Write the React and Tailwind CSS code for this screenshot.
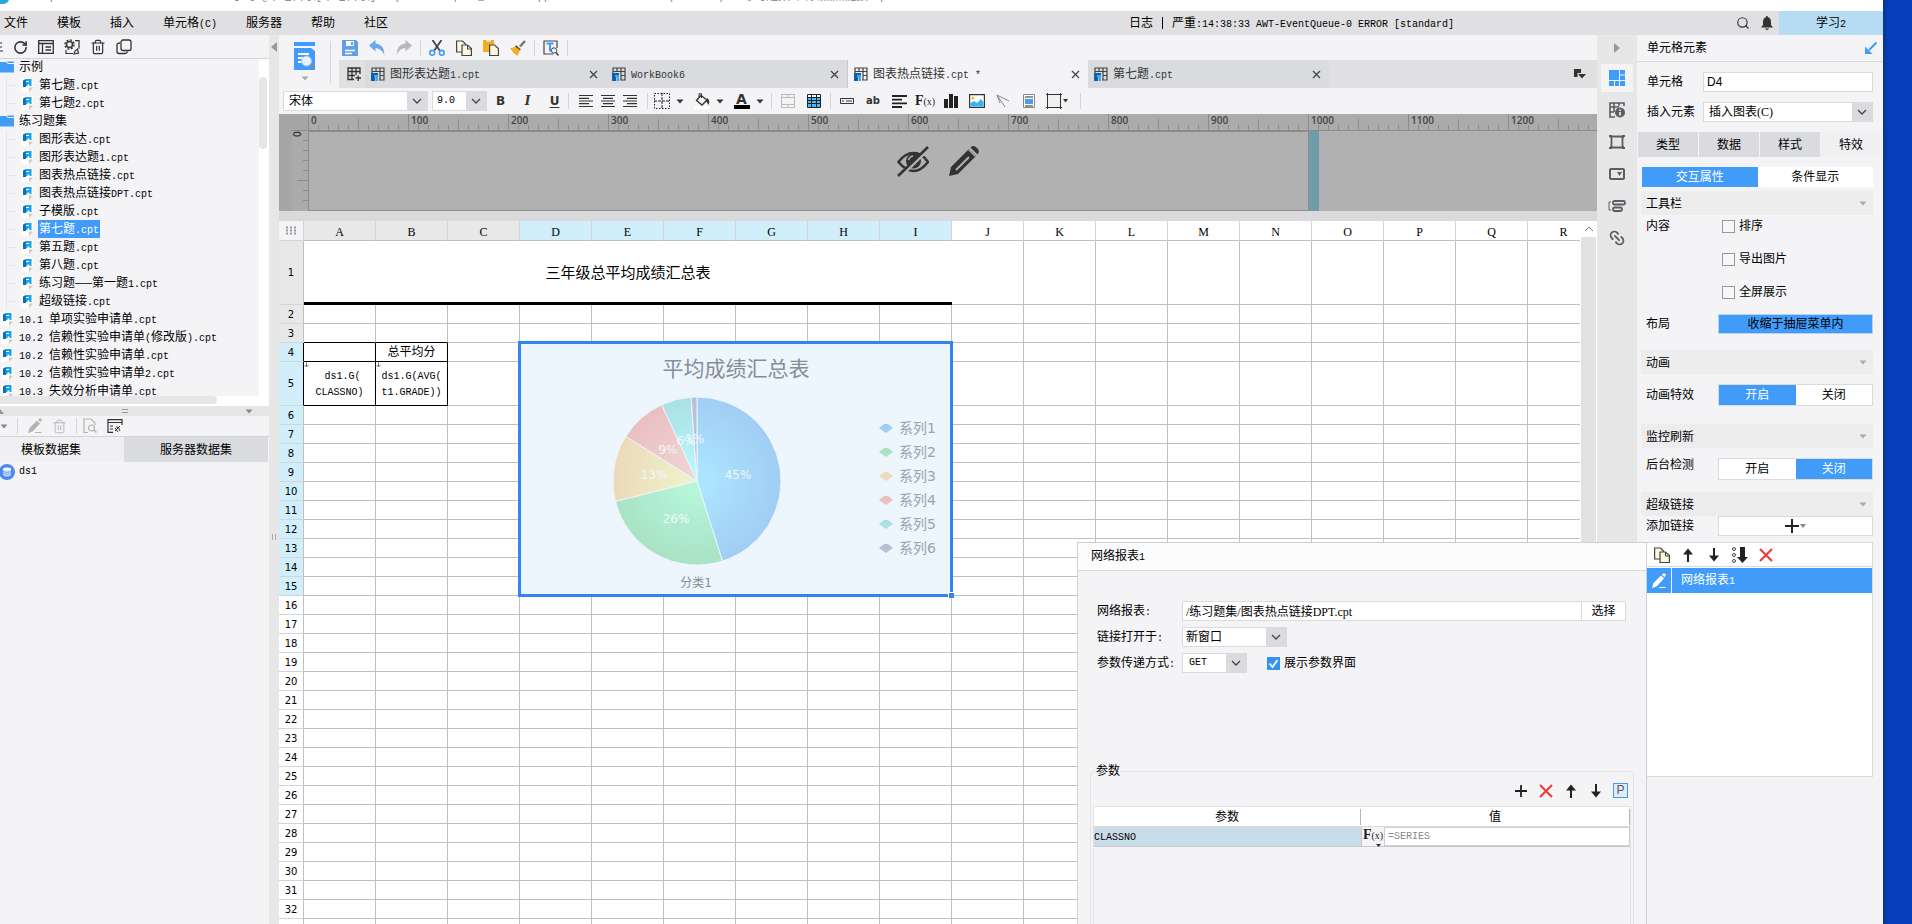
import React, { useState } from 'react';
import { RotateCw, Trash2, Search, Link2 } from 'lucide-react';

const FONT = "font-['Liberation_Serif','Noto_Sans_CJK_SC',sans-serif]";

// Latin runs are set in a fixed pitch, half the width of a Chinese character
const Txt = ({ children }) =>
  children.split(/([\x20-\x7e]+)/).filter(Boolean).map((part, i) =>
    /^[\x20-\x7e]+$/.test(part)
      ? <span key={i} className="font-['Liberation_Mono',monospace] text-[10px] whitespace-pre">{part}</span>
      : <span key={i}>{part}</span>
  );

const Svg = ({ w = 16, h = 16, children, className = '' }) => (
  <svg width={w} height={h} viewBox={`0 0 ${w} ${h}`} fill="none" className={`shrink-0 ${className}`}>{children}</svg>
);

const Caret = ({ className = 'text-[#333]' }) => (
  <Svg w={8} h={5} className={className}><path d="M0.500 0.500h7L4 4.500z" fill="currentColor" /></Svg>
);

const Chevron = () => (
  <Svg w={10} h={6}><path d="M1 1l4 4 4-4" stroke="#444" strokeWidth="1.300" /></Svg>
);

const Divider = ({ className = 'h-4' }) => <span className={`w-px shrink-0 bg-[#d4d4d8] ${className}`} />;

const IconButton = ({ label, className = '', children }) => (
  <button type="button" aria-label={label} className={`flex shrink-0 items-center justify-center ${className}`}>{children}</button>
);

/* ---------- icons ---------- */

const FileIcon = () => (
  <Svg w={12} h={14}>
    <path d="M0 0h12v9l-4 5H0z" fill="#fff" />
    <path d="M8 14V9.500h4z" fill="#c9c9c9" />
    <path d="M2 2.500L5 1v8H2z" fill="#0a70c4" />
    <path d="M5 1h5.500v7H8.500V6.500H6.500V8H5z" fill="#1aa3e8" />
    <path d="M5 3.500h3" stroke="#fff" />
  </Svg>
);

const FolderIcon = () => (
  <Svg w={14} h={12}><path d="M0 1h6l2 2h6v8.500H0z" fill="#409bf9" /><path d="M7 .5h7v1.500H8z" fill="#409bf9" /></Svg>
);

const BookIcon = () => (
  <Svg w={14} h={14}>
    <path d="M1 7V1h12v12H8M1 4.500h12M5 1v4M9 1v12M9 8.500h4" stroke="#444" strokeWidth="1.200" />
    <path d="M0 6h7v4H4v4H0z" fill="#0e5fae" />
    <path d="M3 8h4v6H4.500v-4H3z" fill="#3fa9e8" />
  </Svg>
);

const CopyIcon = () => (
  <Svg>
    <path d="M.6 1h6L9.500 4v8H.6z" fill="#fff6df" stroke="#444" strokeWidth="1.200" />
    <path d="M6 5h5.500L15.400 8.500v7H6z" fill="#fff6df" stroke="#444" strokeWidth="1.200" />
    <path d="M11.500 5v4h4" stroke="#444" />
  </Svg>
);

const PencilIcon = ({ color }) => (
  <Svg>
    <path d="M1 15l1.500-5L10 2.500 13 5.500 5.500 13.500z" fill={color} />
    <path d="M11 1.800L12.200.6q1-.8 2 .2t.3 2l-1.200 1.500z" fill={color} />
    <path d="M8 14.500h6.500" stroke={color} />
  </Svg>
);

const ArrowUp = () => <Svg><path d="M8 15V5" stroke="#222" strokeWidth="2" /><path d="M3 7.500L8 1.500l5 6z" fill="#222" /></Svg>;
const ArrowDown = () => <Svg><path d="M8 1v10" stroke="#222" strokeWidth="2" /><path d="M3 8.500L8 14.500l5-6z" fill="#222" /></Svg>;
const RedCross = () => <Svg><path d="M2 2l12 12M14 2L2 14" stroke="#ea4039" strokeWidth="2.200" /></Svg>;

const FxIcon = () => <span className="font-['Liberation_Serif',serif] text-sm leading-4 text-[#222] font-bold">F<span className="text-[10px] font-normal">(x)</span></span>;

/* ---------- data ---------- */

const menus = ['文件', '模板', '插入', '单元格(C)', '服务器', '帮助', '社区'];

const folders = [
  { name: '示例', files: ['第七题.cpt', '第七题2.cpt'] },
  {
    name: '练习题集',
    files: ['图形表达.cpt', '图形表达题1.cpt', '图表热点链接.cpt', '图表热点链接DPT.cpt', '子模版.cpt', '第七题.cpt', '第五题.cpt', '第八题.cpt', '练习题──第一题1.cpt', '超级链接.cpt'],
    selected: 5,
  },
];

const rootFiles = ['10.1 单项实验申请单.cpt', '10.2 信赖性实验申请单(修改版).cpt', '10.2 信赖性实验申请单.cpt', '10.2 信赖性实验申请单2.cpt', '10.3 失效分析申请单.cpt'];

const tabs = ['图形表达题1.cpt', 'WorkBook6', '图表热点链接.cpt *', '第七题.cpt'];

const columns = 'ABCDEFGHIJKLMNOPQRSTUVWXYZ'.split('');
const rows = Array.from({ length: 40 }, (_, i) => i + 1);

const slices = [
  { name: '系列1', from: 0, to: 45.1, inner: '#ade5ff', outer: '#a0cdf4', label: '45%', x: 217, y: 135 },
  { name: '系列2', from: 45.1, to: 71.1, inner: '#b6f7da', outer: '#a9e2c5', label: '26%', x: 155, y: 179 },
  { name: '系列3', from: 71.1, to: 83.9, inner: '#eef2c8', outer: '#ebdabb', label: '13%', x: 133, y: 135 },
  { name: '系列4', from: 83.9, to: 93.1, inner: '#f0d4d4', outer: '#eabfc2', label: '9%', x: 147, y: 110 },
  { name: '系列5', from: 93.1, to: 98.9, inner: '#b8f8fb', outer: '#abe0e4', label: '6%', x: 165, y: 101 },
  { name: '系列6', from: 98.9, to: 100, inner: '#b9c2da', outer: '#b8c0d8', label: '1%', x: 174, y: 99 },
];

/* ---------- left side ---------- */

const FileRow = ({ name, nested, active }) => (
  <li className="flex h-[18px] items-center">
    {nested && <span className="mr-[5px] h-px w-[9px] bg-[#e6e6ea]" />}
    <FileIcon />
    <a href="#" className={`ml-[5px] h-[18px] pr-px pl-px leading-[18px] whitespace-nowrap ${active ? 'bg-[#409bf9] text-white' : ''}`}><Txt>{name}</Txt></a>
  </li>
);

const FilePanel = () => (
  <aside className="flex w-[269px] shrink-0 flex-col bg-[#f4f4f7]">
    <div className="flex h-6 shrink-0 items-center gap-[10px] border-b border-[#d4d4d8] pt-px text-[#333]">
      <Svg w={3} h={14}><path d="M0 3h2M0 7h2M0 11h3" stroke="#333" /></Svg>
      <IconButton label="刷新"><RotateCw size={15} strokeWidth={2.5} /></IconButton>
      <IconButton label="打开目录">
        <Svg><path d="M.7 1.700h14.600v12.600H.7zM.7 4.500h14.600M4.500 4.500v10M7.500 8H13M7.500 11H13" stroke="#333" strokeWidth="1.300" /></Svg>
      </IconButton>
      <IconButton label="设置">
        <Svg>
          <circle cx="5.500" cy="5.500" r="3" stroke="#333" strokeWidth="1.500" />
          <circle cx="5.500" cy="5.500" r="4.600" stroke="#333" strokeWidth="1.300" strokeDasharray="2 1.600" />
          <path d="M11 1.700h4v8M2 11v3.500h7M10 15l1-3 2.500-2 1 4z" stroke="#333" strokeWidth="1.200" />
        </Svg>
      </IconButton>
      <IconButton label="删除"><Trash2 size={16} strokeWidth={1.8} /></IconButton>
      <IconButton label="复制">
        <Svg><rect x="5" y="1" width="10" height="10.500" rx="2" stroke="#333" strokeWidth="1.300" /><path d="M4 4q-3 0-3 2v6.500q0 2 2 2h6q2 0 2.500-2" stroke="#333" strokeWidth="1.300" /></Svg>
      </IconButton>
    </div>

    <div className="flex h-[337px] shrink-0">
      <ul className="-mt-px flex-1 overflow-hidden">
        {folders.map((folder) => (
          <li key={folder.name}>
            <div className="flex h-[18px] items-center gap-[5px]"><FolderIcon /><span className="leading-[18px]">{folder.name}</span></div>
            <ul className="ml-[6px] border-l border-[#e6e6ea]">
              {folder.files.map((f, i) => <FileRow key={f} name={f} nested active={i === folder.selected} />)}
            </ul>
          </li>
        ))}
        <li>
          <ul className="pl-px">{rootFiles.map((f) => <FileRow key={f} name={f} />)}</ul>
        </li>
      </ul>
      <div className="w-[10px] bg-white pt-[18px]"><div className="h-[72px] w-2 rounded bg-[#e6e6e6]" /></div>
    </div>
    <div className="h-[10px] shrink-0 bg-white pr-[52px]"><div className="h-2 rounded-r bg-[#e6e6e6]" /></div>

    <div className="flex h-[10px] shrink-0 items-center justify-between bg-[#e6e6e6] pr-4 text-[#999]">
      <Svg w={4} h={5}><path d="M0 0l4 5H0z" fill="#999" /></Svg>
      <Svg w={6} h={4}><path d="M0 .5h6M0 3.500h6" stroke="#999" /></Svg>
      <Caret className="text-[#888]" />
    </div>

    <div className="flex h-[21px] shrink-0 items-center gap-[9px] border-b border-[#d4d4d8]">
      <Caret className="text-[#888]" />
      <Divider />
      <IconButton label="编辑"><PencilIcon color="#b4b4b4" /></IconButton>
      <IconButton label="删除数据集"><Trash2 size={15} strokeWidth={1.5} color="#b4b4b4" /></IconButton>
      <Divider className="-mr-1 h-4" />
      <IconButton label="预览">
        <Svg><path d="M6 14.500H2V1h7l4 4v2" stroke="#b4b4b4" strokeWidth="1.200" /><circle cx="9.500" cy="10" r="3" stroke="#b4b4b4" strokeWidth="1.200" /><path d="M12 12l2.500 2.500" stroke="#b4b4b4" strokeWidth="1.500" /></Svg>
      </IconButton>
      <IconButton label="连接">
        <Svg><path d="M6 14.300H1V1.700h14V7M1 4.500h14M3 8h3M3 11h3" stroke="#333" strokeWidth="1.200" /><path d="M8 13l5-5M9 9q3-1 4 4M8 10l3 4" stroke="#333" /></Svg>
      </IconButton>
    </div>

    <div className="flex h-[25px] shrink-0">
      <button type="button" className="w-[124px] bg-[#f0f0f2] pr-[22px]">模板数据集</button>
      <button type="button" className="w-[144px] bg-[#dadbde]">服务器数据集</button>
    </div>
    <div className="mt-px flex h-[18px] items-center gap-1">
      <Svg w={15}>
        <circle cx="7" cy="8" r="8" fill="#4d8bf0" />
        <path d="M3 5v6q4 3 8 0V5z" fill="#c8dcfb" /><ellipse cx="7" cy="5" rx="4" ry="1.500" fill="#fff" />
        <path d="M3 7.500q4 2 8 0M3 9.500q4 2 8 0" stroke="#7fa9f0" />
      </Svg>
      <Txt>ds1</Txt>
    </div>
  </aside>
);

/* ---------- toolbars ---------- */

const MainToolbar = () => (
  <div className="flex h-[25px] items-center gap-[11px] pl-[3px]">
    <IconButton label="保存">
      <Svg><path d="M0 0h14l2 2v14H0z" fill="#5e9fe8" /><path d="M4 1h8v5H4z" fill="#fff" /><path d="M9 2h2v3H9z" fill="#5e9fe8" /><path d="M3 10.500h10M3 13.500h7" stroke="#fff" strokeWidth="1.500" /></Svg>
    </IconButton>
    <IconButton label="撤销"><Svg><path d="M0 5.500L6.500 0v3.500Q15 4 15.500 15 12 8 6.500 8v3.500z" fill="#66a9f0" /></Svg></IconButton>
    <IconButton label="重做"><Svg><path d="M16 5.500L9.500 0v3.500Q1 4 .5 15 4 8 9.500 8v3.500z" fill="#b9b9bc" /></Svg></IconButton>
    <Divider className="-mx-[3px] h-4" />
    <IconButton label="剪切">
      <Svg><path d="M3.500 0L11 11M12.500 0L5 11" stroke="#444" strokeWidth="1.800" /><circle cx="3.200" cy="12.800" r="2.400" stroke="#409bf9" strokeWidth="1.600" /><circle cx="12.800" cy="12.800" r="2.400" stroke="#409bf9" strokeWidth="1.600" /></Svg>
    </IconButton>
    <IconButton label="复制"><CopyIcon /></IconButton>
    <IconButton label="粘贴">
      <Svg><path d="M0 0h11v12H0z" fill="#f3ae1c" /><path d="M2.500 0h6v2h-6z" fill="#fff" stroke="#c58a10" strokeWidth=".6" /><path d="M6.600 5h5l3.800 3.500v7H6.600z" fill="#fff6df" stroke="#444" strokeWidth="1.200" /></Svg>
    </IconButton>
    <IconButton label="格式刷">
      <Svg><path d="M15 1l-5 5.500" stroke="#777" strokeWidth="2.500" /><path d="M6 5l5 4.500-1.500 1L5 7z" fill="#555" /><path d="M0 8q3 0 5-1.500l5 4Q8 14 7.500 16 3 13 0 8z" fill="#f3ae1c" /></Svg>
    </IconButton>
    <Divider className="-mx-[3px] h-4" />
    <IconButton label="查找">
      <Svg><path d="M10 14H1V1h13v7" stroke="#444" strokeWidth="1.200" /><path d="M3.500 3.500h7M7 3.500v8" stroke="#409bf9" strokeWidth="2" /><circle cx="11" cy="10.500" r="2.700" stroke="#444" /><path d="M13 12.500l2.500 3" stroke="#444" strokeWidth="1.500" /></Svg>
    </IconButton>
    <Divider className="-mx-[3px] h-4" />
  </div>
);

const FileTabs = () => {
  const [active, setActive] = useState(2);
  return (
    <div className="flex h-7 items-center bg-[#e0e0e2]">
      <IconButton label="新建" className="h-7 w-[26px] pl-[4px]">
        <Svg w={14} h={14}><path d="M7 12.500H1V1h12v6M1 4.500h12M5 1v11.500M9 1v7M1 8.500h7M8.500 11h5.500M11.200 8.500V14" stroke="#333" strokeWidth="1.300" /></Svg>
      </IconButton>
      {tabs.map((name, i) => (
        <div key={name} className={`flex h-7 w-[241px] items-center pr-2 pl-[6px] ${i === active ? 'border-l border-[#c8c8cc] bg-[#f4f4f7]' : 'bg-[#dadbde]'}`}>
          <button type="button" onClick={() => setActive(i)} className="flex flex-1 items-center gap-[5px] text-[#333]"><BookIcon /><span><Txt>{name}</Txt></span></button>
          <IconButton label="关闭"><Svg w={9} h={9}><path d="M1 1l7 7M8 1L1 8" stroke="#444" strokeWidth="1.300" /></Svg></IconButton>
        </div>
      ))}
      <IconButton label="更多标签" className="mr-[11px] ml-auto">
        <Svg w={12} h={10}><path d="M0 0h7v4H3.500v4H0z" fill="#333" /><path d="M4 5h8L8 9.500z" fill="#333" /></Svg>
      </IconButton>
    </div>
  );
};

const AlignIcon = ({ d }) => <Svg w={14} h={12}><path d={`M0 .5h14M0 6h14M0 11.500h14${d}`} stroke="#333" strokeWidth="1.200" /></Svg>;

const FontToolbar = () => (
  <div className="flex h-[26px] items-center pl-1 text-[#333]">
    <div className="flex h-5 w-[145px] border border-[#dadbde] bg-white">
      <select aria-label="字体" className="flex-1 appearance-none pl-[5px] leading-[18px] text-black"><option>宋体</option></select>
      <span className="flex w-5 items-center justify-center bg-[#dadbde]"><Chevron /></span>
    </div>
    <div className="ml-1 flex h-5 w-[55px] border border-[#dadbde] bg-white">
      <select aria-label="字号" className="w-[34px] appearance-none pl-1 font-['Liberation_Mono',monospace] text-[10px] text-black"><option>9.0</option></select>
      <span className="flex w-5 items-center justify-center bg-[#dadbde]"><Chevron /></span>
    </div>
    <IconButton label="加粗" className="w-[27px]"><b className="font-['DejaVu_Sans',sans-serif] text-xs">B</b></IconButton>
    <IconButton label="斜体" className="w-[27px]"><i className="font-['DejaVu_Serif',serif] text-xs font-bold">I</i></IconButton>
    <IconButton label="下划线" className="w-[27px]"><span className="font-['DejaVu_Sans',sans-serif] text-xs font-bold underline underline-offset-2">U</span></IconButton>
    <Divider />
    <div className="flex px-[6px]">
      <IconButton label="左对齐" className="w-[22px]"><AlignIcon d="M0 3.300h10M0 8.700h10" /></IconButton>
      <IconButton label="居中" className="w-[22px]"><AlignIcon d="M2 3.300h10M2 8.700h10" /></IconButton>
      <IconButton label="右对齐" className="w-[22px]"><AlignIcon d="M4 3.300h10M4 8.700h10" /></IconButton>
    </div>
    <Divider />
    <div className="flex pl-[3px]">
      <IconButton label="边框" className="w-[40px] gap-[6px] pr-[5px]">
        <Svg><path d="M.5.5h15v15H.5z" stroke="#222" strokeDasharray="1.500 1.500" /><path d="M8 0v16M0 8h16" stroke="#222" strokeDasharray="3 1" /></Svg><Caret />
      </IconButton>
      <IconButton label="填充" className="w-[40px] gap-[6px] pr-[5px]">
        <Svg><path d="M0 13h16v3H0z" fill="#fff" /><path d="M7 2.500l6 4.500-5 5-5.500-4.500z" stroke="#333" strokeWidth="1.300" /><path d="M5 5V.8h2.500V5" stroke="#333" /><path d="M13 5q3.500 2 1.500 7L12 8z" fill="#333" /></Svg><Caret />
      </IconButton>
      <IconButton label="字体颜色" className="w-[40px] gap-[6px] pr-[5px]">
        <span className="flex w-4 flex-col items-center border-b-4 border-black font-['DejaVu_Sans',sans-serif] text-sm leading-3 font-bold">A</span><Caret />
      </IconButton>
    </div>
    <Divider />
    <div className="flex px-[3px]">
      <IconButton label="合并" className="w-[26px]"><Svg w={14} h={14}><path d="M.5.5h13v13H.5zM.5 3.500h13M.5 10.500h13M7 0v3M7 11v3" stroke="#bbb" /></Svg></IconButton>
      <IconButton label="表格" className="w-[26px]"><Svg w={14} h={14}><path d="M1 1h12v12H1z" fill="#45b8f5" /><path d="M1 1h12v2.500H1z" fill="#fff" /><path d="M.5.5h13v13H.5zM.5 3.500h13M.5 6.500h13M.5 9.500h13M4.500 .5v13M9.500 .5v13" stroke="#222" /></Svg></IconButton>
    </div>
    <Divider />
    <div className="flex pl-[3px]">
      <IconButton label="控件" className="w-[26px]"><Svg w={14} h={6}><path d="M.5.5h13v5H.5zM2 3h2M6 3h6" stroke="#333" /></Svg></IconButton>
      <IconButton label="文本" className="w-[26px]"><span className="font-['DejaVu_Sans',sans-serif] text-[10px] font-bold">ab</span></IconButton>
      <IconButton label="富文本" className="w-[26px]"><Svg w={15} h={13}><path d="M0 1h15M0 4.600h10M0 8.300h15M0 12h10" stroke="#222" strokeWidth="1.800" /></Svg></IconButton>
      <IconButton label="公式" className="w-[26px]"><FxIcon /></IconButton>
      <IconButton label="图表" className="w-[26px]"><Svg w={14} h={14}><path d="M0 5h4v9H0zM5 0h4v14H5zM10 2h4v12h-4z" fill="#222" /></Svg></IconButton>
      <IconButton label="图片" className="w-[26px]"><Svg h={14}><path d="M.6.6h14.800v12.800H.6z" fill="#fff" stroke="#333" strokeWidth="1.200" /><path d="M1.500 12.500V9L5 7l3 2 4-4 2.500 3v4.500z" fill="#35b4f5" /><circle cx="4" cy="4" r="1.500" fill="#f6b73c" /></Svg></IconButton>
      <IconButton label="斜线" className="w-[26px]"><Svg w={14} h={14}><path d="M1 1l12 6M1 1l8 12M1 1l3 8" stroke="#888" /></Svg></IconButton>
      <IconButton label="子报表" className="w-[26px]"><Svg w={12} h={14}><path d="M.5.5h11v13H.5z" fill="#fff" stroke="#888" /><path d="M2 3h8M2 12h8" stroke="#222" /><path d="M2 5h8v5H2z" fill="#4a9cf0" /></Svg></IconButton>
      <IconButton label="悬浮元素" className="w-[30px] gap-px"><Svg><path d="M1.500 0v16M14.500 0v16M0 1.500h16M0 14.500h16" stroke="#333" /><path d="M2 2h12v12H2z" fill="#f0f0f0" /></Svg><Svg w={5} h={4}><path d="M0 0h5L2.500 3.500z" fill="#333" /></Svg></IconButton>
    </div>
    <Divider className="ml-2 h-4" />
  </div>
);

/* ---------- parameter pane ---------- */

const RulerSegment = ({ value }) => (
  <div className="relative h-4 w-[100px] shrink-0">
    <svg width="100" height="16" className="absolute inset-0">
      <path d="M.5 0v16M50.500 5v11M10.500 11v5M20.500 11v5M30.500 11v5M40.500 11v5M60.500 11v5M70.500 11v5M80.500 11v5M90.500 11v5" stroke="#8c8c8c" />
    </svg>
    <span className="absolute top-0 left-[3px] font-['Open_Sans',sans-serif] text-[10px] leading-3 font-semibold text-[#444]">{value}</span>
  </div>
);

const ParameterPane = () => (
  <div className="flex h-[97px] shrink-0 overflow-hidden bg-[#b1b1b1]">
    <div className="w-[13px] shrink-0 bg-[#a6a6a6]" />
    <div className="flex w-4 shrink-0 flex-col">
      <div className="h-[17px] border-b border-[#8c8c8c] bg-[#a6a6a6]" />
      <svg width="16" height="80" className="bg-[#ababab]">
        <path d="M11 9.500h5M11 19.500h5M11 29.500h5M11 39.500h5M5 49.500h11M11 59.500h5M11 69.500h5" stroke="#8c8c8c" />
        <text x="-6" y="9" transform="rotate(-90)" fontFamily="Open Sans" fontSize="10" fontWeight="600" fill="#333">0</text>
      </svg>
    </div>
    <div className="flex min-w-0 flex-1 flex-col">
      <div className="flex h-[17px] shrink-0 overflow-hidden border-b border-[#8c8c8c] bg-[#ababab]">
        {[0, 1, 2, 3, 4, 5, 6, 7, 8, 9, 10, 11, 12, 13, 14, 15].map((n) => <RulerSegment key={n} value={n * 100} />)}
      </div>
      <div className="flex flex-1">
        <div className="flex w-[1001px] shrink-0 justify-center gap-[19px] border border-[#8c8c8c] pt-[13px] pl-[259px]">
          <IconButton label="隐藏参数面板" className="h-8 w-8">
            <Svg w={32} h={32}>
              <path d="M1.500 17Q8 8 16.500 8T31 17q-7 9-14.500 9T1.500 17z" stroke="#333" strokeWidth="2.500" />
              <circle cx="16.500" cy="16" r="7.500" fill="#333" />
              <path d="M11.500 15q1-3.500 4.500-4" stroke="#b1b1b1" strokeWidth="1.500" />
              <path d="M3 32L33 3" stroke="#b1b1b1" strokeWidth="3" />
              <path d="M1 31L31 2" stroke="#333" strokeWidth="2.500" />
            </Svg>
          </IconButton>
          <IconButton label="编辑参数面板" className="h-8 w-8">
            <Svg w={32} h={32}>
              <path d="M1 31l2-9L21 4l7 7-18 18z" fill="#333" />
              <path d="M22.500 2.500q3-3 6.500.5t.5 6.500z" fill="#333" />
              <path d="M8 25L21 12" stroke="#b1b1b1" strokeWidth="2" />
              <path d="M20.500 4.500l7 7" stroke="#b1b1b1" strokeWidth="1.200" />
            </Svg>
          </IconButton>
        </div>
        <div className="w-[10px] bg-[#6e9ca9]" />
      </div>
    </div>
  </div>
);

/* ---------- sheet ---------- */

const R = 84;
const point = (pct) => {
  const a = (pct / 100) * 2 * Math.PI;
  return `${176 + R * Math.sin(a)} ${137 - R * Math.cos(a)}`;
};

const PieChart = () => (
  <svg width="429" height="250" fontFamily="'DejaVu Sans','Noto Sans CJK SC',sans-serif" className="block">
    <defs>
      {slices.map((s, i) => (
        <radialGradient key={s.name} id={`slice${i}`} gradientUnits="userSpaceOnUse" cx="176" cy="137" r={R}>
          <stop offset="0.100" stopColor={s.inner} /><stop offset="1" stopColor={s.outer} />
        </radialGradient>
      ))}
    </defs>
    <text x="215" y="32" textAnchor="middle" fontSize="21" fill="#868e98">平均成绩汇总表</text>
    {slices.map((s, i) => (
      <path key={s.name} d={`M176 137L${point(s.from)}A${R} ${R} 0 0 1 ${point(s.to)}z`} fill={`url(#slice${i})`} stroke="#edf5fd" />
    ))}
    {slices.map((s) => <text key={s.name} x={s.x} y={s.y} textAnchor="middle" fontSize="12" fill="#f0f7fd">{s.label}</text>)}
    <text x="175" y="243" textAnchor="middle" fontSize="12" fill="#868e98">分类1</text>
    {slices.map((s, i) => (
      <g key={s.name}>
        <path d={`M358 ${84 + i * 24}l5-4h4l5 4-7 5z`} fill={s.outer} />
        <text x="378" y={89 + i * 24} fontSize="14" fill="#9ba3ad">{s.name}</text>
      </g>
    ))}
  </svg>
);

const rowHeight = (n) => (n === 1 ? 'h-16' : n === 5 ? 'h-[44px]' : 'h-[19px]');

const headTone = (i, from, to) => (i < from ? 'bg-[#e8e8e8]' : i <= to ? 'bg-[#d0effb]' : 'bg-white');

const cellBorder = (r, c) => {
  const right = (r === 4 || r === 5) && c < 2 ? 'border-r-black' : 'border-r-[#c0c0c0]';
  const bottom = r >= 3 && r <= 5 && c < 2 ? 'border-b-black' : 'border-b-[#c0c0c0]';
  return `${right} ${bottom}`;
};

const cellText = { '4-1': ['总平均分'], '5-0': [' ds1.G(', 'CLASSNO)'], '5-1': ['ds1.G(AVG(', 't1.GRADE))'] };

const Sheet = () => (
  <div className="flex min-h-0 flex-1">
    <div className="relative min-w-0 flex-1 overflow-hidden bg-white">
      <table className="w-[1897px] table-fixed border-separate border-spacing-0">
        <colgroup>
          <col className="w-[25px]" />
          {columns.map((c) => <col key={c} className="w-[72px]" />)}
        </colgroup>
        <thead>
          <tr className="h-5">
            <th className="border-r border-b border-[#d4d4d8] bg-[#f4f4f7] p-0">
              <Svg w={11} h={9} className="mx-auto"><path d="M0 1.500h11M0 4.500h11M0 7.500h11" stroke="#999" strokeWidth="2" strokeDasharray="2 2" /></Svg>
            </th>
            {columns.map((c, i) => (
              <th key={c} scope="col" className={`border-r border-b border-r-[#d4d4d8] border-b-[#c0c0c0] p-0 pt-[3px] font-['Liberation_Serif',serif] text-xs leading-4 font-normal ${headTone(i, 3, 8)}`}>{c}</th>
            ))}
          </tr>
        </thead>
        <tbody>
          {rows.map((r) => (
            <tr key={r} className={rowHeight(r)}>
              <th scope="row" className={`border-r border-b border-b-[#d4d4d8] p-0 pt-px font-['DejaVu_Sans',sans-serif] text-[10px] leading-4 font-normal ${r === 4 || r === 5 ? 'border-r-black' : 'border-r-[#c0c0c0]'} ${headTone(r, 4, 15)}`}>{r}</th>
              {columns.map((c, i) => {
                if (r === 1 && i === 0) {
                  return <td key={c} colSpan={9} className="border-b-3 border-black p-0 pt-[3px] text-center text-[15px] leading-5">三年级总平均成绩汇总表</td>;
                }
                if (r === 1 && i < 9) return null;
                const lines = cellText[`${r}-${i}`];
                return (
                  <td key={c} className={`relative border-r border-b p-0 pt-px text-center leading-[15px] ${cellBorder(r, i)}`}>
                    {lines && lines.map((l) => <div key={l}><Txt>{l}</Txt></div>)}
                    {r === 5 && lines && <Svg w={5} h={6} className="absolute top-0 left-0"><path d="M2.500 0v5M.5 3l2 2 2-2" stroke="#777" /></Svg>}
                  </td>
                );
              })}
            </tr>
          ))}
        </tbody>
      </table>

      {/* floating chart over D4:I15 */}
      <div className="absolute top-[120px] left-[239px] border-3 border-[#3484f0] bg-[#edf5fd]">
        <PieChart />
        <span className="absolute -right-1 -bottom-1 h-[6px] w-[6px] border-t border-l border-white bg-[#3484f0]" />
      </div>
    </div>
    <div className="w-[17px] shrink-0 border-x border-white bg-[#e2e2e2]">
      <IconButton label="向上滚动" className="h-4 w-full bg-white"><Svg w={10} h={6}><path d="M1 5l4-4 4 4" stroke="#777" /></Svg></IconButton>
    </div>
  </div>
);

const Editor = () => (
  <main className="flex min-w-0 flex-1 flex-col bg-[#f4f4f7]">
    <div className="flex h-[53px] shrink-0">
      <div className="flex w-[60px] shrink-0">
        <IconButton label="分页预览" className="mt-[7px] w-[51px] flex-col self-start">
          <Svg w={21} h={28}>
            <path d="M0 0h21v4H0zM0 6h17l4 3v19H0z" fill="#409bf9" />
            <path d="M4 12h11M4 16h5M4 20h4" stroke="#fff" strokeWidth="2" />
            <circle cx="12.500" cy="19" r="5" fill="#e6f1fd" stroke="#9cc8f8" /><path d="M16 23l3.500 4" stroke="#888" strokeWidth="2" />
          </Svg>
          <Caret className="mt-[6px] text-[#aaa]" />
        </IconButton>
        <Divider className="mt-[6px] h-[42px]" />
      </div>
      <div className="min-w-0 flex-1"><MainToolbar /><FileTabs /></div>
    </div>
    <FontToolbar />
    <ParameterPane />
    <div className="h-[10px] shrink-0 bg-[#dadadd]" />
    <Sheet />
  </main>
);

/* ---------- right side ---------- */

const SideIcons = () => (
  <nav className="flex w-[40px] shrink-0 flex-col items-center gap-1 bg-[#e7e7e7] text-[#5b5d66]">
    <IconButton label="收起" className="h-[25px]"><Svg w={6} h={10}><path d="M0 0l6 5-6 5z" fill="#999" /></Svg></IconButton>
    <IconButton label="单元格元素" className="h-7 w-8 bg-[#f4f4f7]">
      <Svg><path d="M0 0h10v10H0zM11 0h5v4.500h-5zM11 5.500h5V10h-5zM0 11h5v5H0zM6 11h4v5H6zM11 11h5v5h-5z" fill="#409bf9" /></Svg>
    </IconButton>
    <IconButton label="单元格属性" className="h-7 w-8"><Svg><path d="M15 4V1H1v14h5M1 5h9M5 1v9M10 1v3M1 10h4" stroke="currentColor" strokeWidth="1.600" /><circle cx="11" cy="10.500" r="5" fill="currentColor" /><path d="M11 7.500v1.500M11 10v3.500" stroke="#fff" strokeWidth="1.500" /></Svg></IconButton>
    <IconButton label="悬浮元素" className="h-7 w-8"><Svg><path d="M2.500 2.500h11v11h-11z" stroke="currentColor" strokeWidth="1.800" /><path d="M0 1h3v3H1V3H0zM13 1h3v2h-1v1h-2zM0 15h3v-3H1v1H0zM13 15h3v-2h-1v-1h-2z" fill="currentColor" /></Svg></IconButton>
    <IconButton label="控件设置" className="h-7 w-8"><Svg h={12}><rect x="1" y="1" width="14" height="10" rx="1" stroke="currentColor" strokeWidth="2" /><path d="M8 4h5l-2.500 4z" fill="currentColor" /></Svg></IconButton>
    <IconButton label="条件属性" className="h-7 w-8"><Svg w={18} h={12}><path d="M3 2H1v8h2" stroke="currentColor" /><rect x="5" y="1" width="12" height="3.500" rx="1.500" stroke="currentColor" strokeWidth="1.800" /><rect x="5" y="7.500" width="9" height="3.500" rx="1.500" stroke="currentColor" strokeWidth="1.800" /></Svg></IconButton>
    <IconButton label="超级链接" className="h-7 w-8"><Link2 size={18} strokeWidth={2.4} className="rotate-45" /></IconButton>
  </nav>
);

const SectionHead = ({ children, className }) => (
  <h3 className={`ml-1 flex h-6 shrink-0 items-center justify-between bg-[#ededee] pt-px pr-[6px] pl-[5px] ${className}`}>{children}<Caret className="text-[#aaa]" /></h3>
);

const Toggle = ({ on, className }) => (
  <div className={`flex h-[22px] w-[155px] border border-[#dadbde] bg-white ${className}`}>
    {['开启', '关闭'].map((t) => <button type="button" key={t} className={`flex-1 ${t === on ? 'bg-[#409bf9] text-white' : ''}`}>{t}</button>)}
  </div>
);

const Properties = () => (
  <aside className="flex w-[246px] shrink-0 flex-col bg-[#f4f4f7] pr-[10px]">
    <div className="-mr-[10px] flex h-[27px] shrink-0 items-center justify-between border-b border-[#dadadd] pr-[6px] pl-[10px]">
      <h2>单元格元素</h2>
      <IconButton label="弹出"><Svg w={12} h={12}><path d="M11.500.5L4 8" stroke="#409bf9" strokeWidth="2" /><path d="M0 4.500V12h7.500z" fill="#409bf9" /></Svg></IconButton>
    </div>
    <div className="mt-[10px] flex h-5 items-center pl-[10px]">
      <label htmlFor="cell" className="w-14">单元格</label>
      <input id="cell" defaultValue="D4" className="h-5 w-0 flex-1 border border-[#dadbde] bg-white pl-[3px] font-['Liberation_Sans',sans-serif]" />
    </div>
    <div className="mt-[10px] flex h-5 items-center pl-[10px]">
      <label htmlFor="insert" className="w-14">插入元素</label>
      <div className="flex h-5 flex-1 border border-[#dadbde] bg-white">
        <select id="insert" className="flex-1 appearance-none pl-[5px] leading-[18px]"><option>插入图表(C)</option></select>
        <span className="flex w-5 items-center justify-center bg-[#dadbde]"><Chevron /></span>
      </div>
    </div>
    <div className="mt-[10px] -mr-2 flex h-[25px] gap-px pl-px">
      {['类型', '数据', '样式', '特效'].map((t) => <button type="button" key={t} className={`flex-1 ${t === '特效' ? 'bg-[#f0f0f2]' : 'bg-[#dadbde]'}`}>{t}</button>)}
    </div>
    <div className="mt-[10px] flex h-5 pl-[5px]">
      <button type="button" className="flex-1 bg-[#409bf9] text-white">交互属性</button>
      <button type="button" className="flex-1 bg-white">条件显示</button>
    </div>

    <SectionHead className="mt-1">工具栏</SectionHead>
    <div className="flex pl-[9px]">
      <span className="mt-[3px] leading-4">内容</span>
      <div className="mt-[3px] ml-[52px] flex flex-col gap-[17px]">
        {['排序', '导出图片', '全屏展示'].map((t) => (
          <label key={t} className="flex h-4 items-center gap-1"><input type="checkbox" className="h-[13px] w-[13px] appearance-none border border-[#999] bg-[#f8f8fa]" />{t}</label>
        ))}
      </div>
    </div>
    <div className="mt-[14px] flex h-5 items-center justify-between pl-[9px]">
      <span>布局</span>
      <button type="button" className="h-5 w-[155px] border border-[#b9d3ee] bg-[#409bf9]">收缩于抽屉菜单内</button>
    </div>

    <SectionHead className="mt-4">动画</SectionHead>
    <div className="mt-[10px] flex items-center justify-between pl-[9px]"><span>动画特效</span><Toggle on="开启" /></div>
    <SectionHead className="mt-[18px]">监控刷新</SectionHead>
    <div className="flex justify-between pl-[9px]"><span className="mt-[9px] leading-4">后台检测</span><Toggle on="关闭" className="mt-[10px]" /></div>
    <SectionHead className="mt-3">超级链接</SectionHead>
    <div className="flex h-5 items-center justify-between pl-[9px]">
      <span>添加链接</span>
      <IconButton label="添加链接" className="h-5 w-[155px] gap-px border border-[#dadbde] bg-white">
        <Svg w={14} h={14}><path d="M7 0v14M0 7h14" stroke="#222" strokeWidth="2" /></Svg><Svg w={6} h={4}><path d="M0 0h6L3 4z" fill="#888" /></Svg>
      </IconButton>
    </div>

    <div className="mt-[6px] ml-[9px] h-[235px] shrink-0 border border-[#dadbde] bg-white">
      <div className="flex h-6 items-center border-b border-[#dadbde] pl-[2px]">
        <IconButton label="复制" className="w-[26px]"><CopyIcon /></IconButton>
        <IconButton label="上移" className="w-[26px]"><ArrowUp /></IconButton>
        <IconButton label="下移" className="w-[26px]"><ArrowDown /></IconButton>
        <IconButton label="排序" className="w-[26px]">
          <Svg><circle cx="2" cy="2" r="1.500" stroke="#444" /><circle cx="2" cy="8" r="1.500" stroke="#444" /><circle cx="2" cy="14" r="1.500" stroke="#444" /><path d="M8 0h5v10h3l-5.500 6L5 10h3z" fill="#222" /></Svg>
        </IconButton>
        <IconButton label="删除" className="w-[26px]"><RedCross /></IconButton>
      </div>
      <div className="mt-px flex h-[25px] items-center bg-[#409bf9] text-white">
        <IconButton label="编辑链接" className="h-full w-[25px] border-r border-white"><PencilIcon color="#fff" /></IconButton>
        <span className="ml-[9px]"><Txt>网络报表1</Txt></span>
      </div>
    </div>
  </aside>
);

const LinkDialog = () => (
  <section className="absolute top-[542px] right-[236px] bottom-0 flex w-[570px] flex-col overflow-hidden border-x border-t border-[#d0d0d4] bg-[#f4f4f7]">
    <h2 className="flex h-7 shrink-0 items-center border-b border-[#dadadd] bg-[#fcfcfc] pl-[13px]"><span><Txt>网络报表1</Txt></span></h2>
    <div className="mt-[30px] flex flex-col gap-[6px] pr-5 pl-[19px]">
      <div className="flex h-5 items-center">
        <label htmlFor="report" className="w-[85px]"><Txt>网络报表:</Txt></label>
        <input id="report" defaultValue="/练习题集/图表热点链接DPT.cpt" className="h-5 flex-1 border border-[#dadbde] bg-white pl-[3px]" />
        <button type="button" className="h-5 w-[44px] border border-l-0 border-[#dadbde] bg-white">选择</button>
      </div>
      <div className="flex h-5 items-center">
        <label htmlFor="target" className="w-[85px]"><Txt>链接打开于:</Txt></label>
        <div className="flex h-5 w-[105px] border border-[#dadbde] bg-white">
          <select id="target" className="flex-1 appearance-none pl-[3px] leading-[18px]"><option>新窗口</option></select>
          <span className="flex w-5 items-center justify-center bg-[#dadbde]"><Chevron /></span>
        </div>
      </div>
      <div className="flex h-5 items-center">
        <label htmlFor="method" className="w-[85px]"><Txt>参数传递方式:</Txt></label>
        <div className="flex h-5 w-[65px] border border-[#dadbde] bg-white">
          <select id="method" className="w-0 flex-1 appearance-none pl-[6px] font-['Liberation_Mono',monospace] text-[10px]"><option>GET</option></select>
          <span className="flex w-5 items-center justify-center bg-[#dadbde]"><Chevron /></span>
        </div>
        <label className="ml-5 flex items-center gap-1">
          <span className="relative flex h-[13px] w-[13px]">
            <input type="checkbox" defaultChecked className="h-[13px] w-[13px] appearance-none bg-[#3292f2]" />
            <Svg w={13} h={13} className="pointer-events-none absolute inset-0"><path d="M2.500 6.500l3 3.500 5-7" stroke="#fff" strokeWidth="1.800" /></Svg>
          </span>
          展示参数界面
        </label>
      </div>
    </div>

    <fieldset className="mx-3 mt-[90px] h-[200px] rounded border border-[#e4e4e8]">
      <legend className="ml-1 px-px leading-4">参数</legend>
      <div className="-mt-1 flex h-[31px] items-center justify-end">
        <IconButton label="添加参数" className="w-[25px]"><Svg w={12} h={12}><path d="M6 0v12M0 6h12" stroke="#222" strokeWidth="1.800" /></Svg></IconButton>
        <IconButton label="删除参数" className="w-[25px]"><RedCross /></IconButton>
        <IconButton label="上移参数" className="w-[25px]"><ArrowUp /></IconButton>
        <IconButton label="下移参数" className="w-[25px]"><ArrowDown /></IconButton>
        <IconButton label="参数类型" className="w-[25px]"><span className="h-[15px] w-[15px] border border-[#409bf9] bg-[#dcecfb] font-['Liberation_Sans',sans-serif] leading-[13px] text-[#555]">P</span></IconButton>
      </div>
      <div className="mx-[2px] h-[160px] border border-[#e4e4e8]">
        <table className="w-full table-fixed border-separate border-spacing-0">
          <colgroup><col className="w-[267px]" /><col /></colgroup>
          <thead>
            <tr className="h-5 bg-white">
              <th scope="col" className="border-b border-[#dadadd] p-0 font-normal"><div className="border-r border-[#b8b8ac] leading-4">参数</div></th>
              <th scope="col" className="border-b border-[#dadadd] p-0 font-normal"><div className="border-r border-[#b8b8ac] leading-4">值</div></th>
            </tr>
          </thead>
          <tbody>
            <tr className="h-5">
              <td className="border-b border-[#c8c8cc] bg-[#c8dcea] p-0 leading-4"><Txt>CLASSNO</Txt></td>
              <td className="border-b border-l border-[#c8c8cc] p-0">
                <div className="flex items-center">
                  <IconButton label="值类型" className="h-[19px] w-[22px] flex-col">
                    <FxIcon />
                    <Svg w={5} h={3} className="mr-[3px] self-end"><path d="M0 0h5L2.500 3z" fill="#333" /></Svg>
                  </IconButton>
                  <input aria-label="值" defaultValue="=SERIES" className="h-[19px] w-0 flex-1 border border-[#d0d0d4] bg-white pl-[3px] font-['Liberation_Mono',monospace] text-[10px] text-[#888]" />
                </div>
              </td>
            </tr>
          </tbody>
        </table>
      </div>
    </fieldset>
  </section>
);

const App = () => (
  <div className={`flex h-screen overflow-hidden text-xs text-black ${FONT}`}>
    <div className="relative flex min-w-0 flex-1 flex-col">
      {/* title bar, scrolled almost out of view */}
      <div className="flex h-[11px] shrink-0 items-start overflow-hidden bg-white text-[#777]">
        <Svg w={10} h={4}><path d="M0 0h9Q7 4 3 4H0z" fill="#2aa5e0" /></Svg>
        <p className="-mt-3 ml-1 leading-4 whitespace-pre"><Txt>FineReport 10.0</Txt></p>
        <p className="-mt-3 ml-[128px] leading-4 whitespace-pre"><Txt>学习2@本地目录[本地目录]   (D:\FineReport_10.0\webapps\webroot\WEB-INF\reportlets)   练习题集/图表热点链接.cpt</Txt></p>
      </div>
      <header className="flex h-6 shrink-0 items-center bg-[#e0e0e2]">
        <nav className="flex gap-[29px] pl-1">
          {menus.map((m) => <a key={m} href="#" className="whitespace-nowrap"><Txt>{m}</Txt></a>)}
        </nav>
        <div className="mr-[282px] ml-auto flex whitespace-nowrap">
          <span>日志</span>
          <Divider className="mx-[9px] h-3 self-center bg-black" />
          <span><Txt>严重:14:38:33 AWT-EventQueue-0 ERROR [standard]</Txt></span>
        </div>
        <IconButton label="搜索"><Search size={14} strokeWidth={2} color="#333" /></IconButton>
        <IconButton label="消息" className="mr-[5px] ml-[10px] w-[14px]">
          <Svg w={12} h={14}><path d="M6 0q1 0 1 1.200Q10 2 10 6v3l2 2.500H0L2 9V6q0-4 3-4.800Q5 0 6 0z" fill="#333" /><path d="M4 12.500h4Q7 14 6 14t-2-1.500z" fill="#333" /></Svg>
        </IconButton>
        <button type="button" className="h-6 w-[104px] bg-[#b6dcf3]"><Txt>学习2</Txt></button>
      </header>

      <div className="flex min-h-0 flex-1">
        <FilePanel />
        <div className="flex w-[10px] shrink-0 flex-col items-center bg-[#e7e7e7] pt-[7px]">
          <Svg w={6} h={10}><path d="M6 0v10L0 5z" fill="#999" /></Svg>
          <Svg w={4} h={6} className="mt-[482px]"><path d="M.5 0v6M3.500 0v6" stroke="#aaa" /></Svg>
        </div>
        <Editor />
        <SideIcons />
        <Properties />
      </div>
      <LinkDialog />
    </div>
    <div className="w-[29px] shrink-0 bg-linear-to-r from-[#0a3490] to-[#0540ba] to-20%" />
  </div>
);

export default App;
